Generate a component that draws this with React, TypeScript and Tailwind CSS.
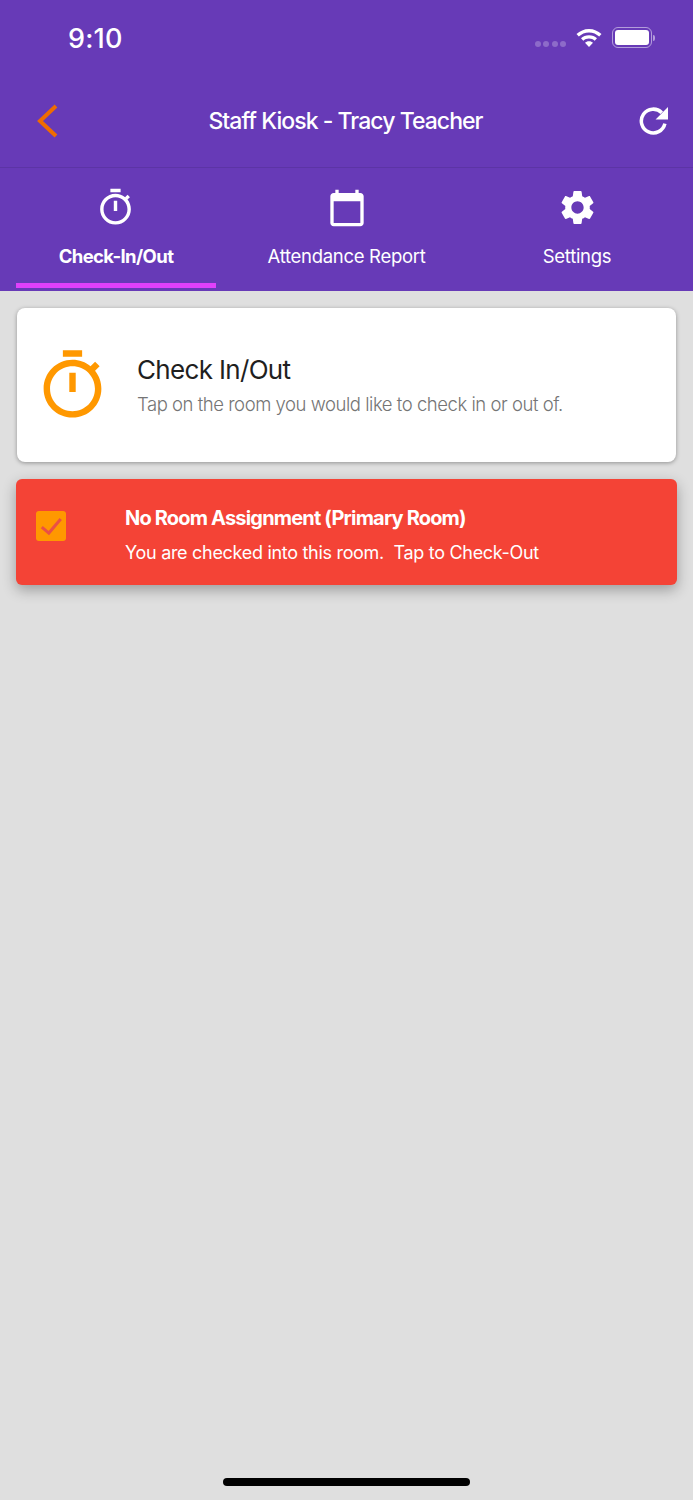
import React from "react";

const FONT = "font-['Inter','Liberation_Sans',sans-serif]";

function Timer({ className }: { className: string }) {
  return (
    <svg viewBox="0 0 24 24" fill="currentColor" className={className}>
      <path d="M15 1H9v2h6V1zm-4 13h2V8h-2v6zm8.03-6.61l1.42-1.42c-.43-.51-.9-.99-1.41-1.41l-1.42 1.42C16.07 4.74 14.12 4 12 4c-4.97 0-9 4.03-9 9s4.02 9 9 9 9-4.03 9-9c0-2.12-.74-4.07-1.97-5.61zM12 20c-3.87 0-7-3.13-7-7s3.13-7 7-7 7 3.13 7 7-3.13 7-7 7z" />
    </svg>
  );
}

function Calendar({ className }: { className: string }) {
  return (
    <svg viewBox="0 0 24 24" fill="currentColor" className={className}>
      <path d="M20 3h-1V1h-2v2H7V1H5v2H4c-1.1 0-2 .9-2 2v16c0 1.1.9 2 2 2h16c1.1 0 2-.9 2-2V5c0-1.1-.9-2-2-2zm0 18H4V8h16v13z" />
    </svg>
  );
}

function Gear({ className }: { className: string }) {
  return (
    <svg viewBox="0 0 24 24" fill="currentColor" className={className}>
      <path d="M19.14 12.94c.04-.3.06-.61.06-.94 0-.32-.02-.64-.07-.94l2.03-1.58c.18-.14.23-.41.12-.61l-1.92-3.32c-.12-.22-.37-.29-.59-.22l-2.39.96c-.5-.38-1.03-.7-1.62-.94l-.36-2.54c-.04-.24-.24-.41-.48-.41h-3.84c-.24 0-.43.17-.47.41l-.36 2.54c-.59.24-1.13.57-1.62.94l-2.39-.96c-.22-.08-.47 0-.59.22L2.74 8.87c-.12.21-.08.47.12.61l2.03 1.58c-.05.3-.09.63-.09.94s.02.64.07.94l-2.03 1.58c-.18.14-.23.41-.12.61l1.92 3.32c.12.22.37.29.59.22l2.39-.96c.5.38 1.03.7 1.62.94l.36 2.54c.05.24.24.41.48.41h3.84c.24 0 .44-.17.47-.41l.36-2.54c.59-.24 1.13-.56 1.62-.94l2.39.96c.22.08.47 0 .59-.22l1.92-3.32c.12-.22.07-.47-.12-.61l-2.01-1.58zM12 15.6c-1.98 0-3.6-1.62-3.6-3.6s1.62-3.6 3.6-3.6 3.6 1.62 3.6 3.6-1.62 3.6-3.6 3.6z" />
    </svg>
  );
}

function Refresh({ className }: { className: string }) {
  return (
    <svg viewBox="0 0 28 28" className={className}>
      <path d="M25 17a11.500 11.500 0 1 1-3-10.500" fill="none" stroke="currentColor" strokeWidth="3.400" />
      <path d="M28 1v12H16z" fill="currentColor" />
    </svg>
  );
}

function Tab({ label, active, icon }: { label: string; active?: boolean; icon: React.ReactNode }) {
  return (
    <div className="relative flex h-full w-[200px] flex-col items-center">
      <div className="mt-[19px] flex h-[41px] items-center justify-center">{icon}</div>
      <div
        className={`mt-[16px] text-[18.500px] leading-[24px] text-white ${active ? "font-bold tracking-[-0.6px]" : "font-normal tracking-[-0.3px]"}`}
      >
        {label}
      </div>
      {active && <div className="absolute bottom-[3px] left-0 h-[5px] w-full bg-[#e040fb]" />}
    </div>
  );
}

export default function App() {
  return (
    <div className={`relative flex h-[1500px] w-[693px] flex-col overflow-hidden bg-[#dfdfdf] ${FONT}`}>
      <header className="bg-[#673ab7]">
        <div className="relative flex h-[76px] items-start justify-between pl-[68px] pr-[38px] pt-[22px]">
          <span className="text-[27px] font-medium leading-[34px] tracking-[0.2px] text-white">9:10</span>
          <div className="mt-[5px] flex items-center">
            <div className="mt-[13px] flex gap-[2.500px]">
              <span className="h-[6px] w-[6px] rounded-full bg-white/25" />
              <span className="h-[6px] w-[6px] rounded-full bg-white/25" />
              <span className="h-[6px] w-[6px] rounded-full bg-white/25" />
              <span className="h-[6px] w-[6px] rounded-full bg-white/25" />
            </div>
            <svg viewBox="0 0 26 20" className="ml-[10px] h-[20px] w-[26px] text-white" fill="currentColor">
              <path d="M13 1C8 1 4 3 .5 6l2.300 2.500C5.500 6 9 4.400 13 4.400s7.500 1.600 10.200 4.100L25.500 6C22 3 18 1 13 1z" />
              <path d="M13 7.200c-3.200 0-6 1.200-8 3.100l2.300 2.500c1.500-1.400 3.500-2.200 5.700-2.200s4.200.8 5.700 2.200l2.300-2.500c-2-1.900-4.800-3.100-8-3.100z" />
              <path d="M13 13.200c-1.600 0-3 .6-4 1.500l4 4.300 4-4.300c-1-.9-2.400-1.500-4-1.500z" />
            </svg>
            <div className="ml-[10px] flex items-center">
              <div className="h-[21px] w-[40px] rounded-[6px] border border-white/50 p-[2px]">
                <div className="h-full w-full rounded-[3px] bg-white" />
              </div>
              <div className="ml-[1px] h-[6px] w-[2px] rounded-r-[2px] bg-white/50" />
            </div>
          </div>
        </div>
        <div className="flex h-[91px] items-center justify-between pb-[2px] pl-[36px] pr-[25px]">
          <svg viewBox="0 0 22 34" className="h-[34px] w-[22px] text-[#ef6c00]" fill="none" stroke="currentColor" strokeWidth="4">
            <path d="M20 2 L4 17 L20 32" />
          </svg>
          <h1 className="mr-[6px] text-[23px] font-medium leading-[32px] tracking-[-0.95px] text-white">Staff Kiosk - Tracy Teacher</h1>
          <Refresh className="h-[29px] w-[29px] text-white" />
        </div>
        <div className="h-px bg-[#5c34a5]" />
        <nav className="flex h-[123px] justify-between px-[16px]">
          <Tab label="Check-In/Out" active icon={<Timer className="mr-[2px] h-[41px] w-[41px] text-white" />} />
          <Tab label="Attendance Report" icon={<Calendar className="h-[40px] w-[40px] text-white" />} />
          <Tab label="Settings" icon={<Gear className="h-[41px] w-[41px] text-white" />} />
        </nav>
      </header>

      <main className="flex flex-1 flex-col">
        <section className="mx-[17px] mt-[17px] flex h-[154px] items-center rounded-[8px] bg-white pl-[17px] shadow-[0_1px_4px_rgba(0,0,0,0.35)]">
          <Timer className="h-[77px] w-[77px] text-[#ff9800]" />
          <div className="ml-[26px] mt-[-1px]">
            <div className="text-[26px] font-normal leading-[34px] tracking-[-0.67px] text-[#1f1f1f]">Check In/Out</div>
            <div className="mt-[5px] text-[18.500px] font-light leading-[24px] tracking-[-0.46px] text-[#757575]">
              Tap on the room you would like to check in or out of.
            </div>
          </div>
        </section>

        <section className="mx-[16px] mt-[17px] flex h-[106px] items-center rounded-[6px] bg-[#f44336] pl-[20px] shadow-[0_5px_14px_rgba(0,0,0,0.3)]">
          <div className="mb-[12px] flex h-[30px] w-[30px] items-center justify-center rounded-[3px] bg-[#ff9800]">
            <svg viewBox="0 0 24 24" className="h-[26px] w-[26px] text-[#ea5045]" fill="none" stroke="currentColor" strokeWidth="2.800">
              <path d="M3.500 13 L10 18.500 L21 5.500" />
            </svg>
          </div>
          <div className="ml-[59px] mt-[7px]">
            <div className="text-[20px] font-bold leading-[26px] tracking-[-0.82px] text-white">No Room Assignment (Primary Room)</div>
            <div className="mt-[9px] whitespace-pre text-[18px] font-normal leading-[26px] tracking-[-0.3px] text-white">
              {"You are checked into this room.  Tap to Check-Out"}
            </div>
          </div>
        </section>

        <div className="mt-auto mb-[14px] h-[8px] w-[247px] self-center rounded-full bg-black" />
      </main>
    </div>
  );
}
